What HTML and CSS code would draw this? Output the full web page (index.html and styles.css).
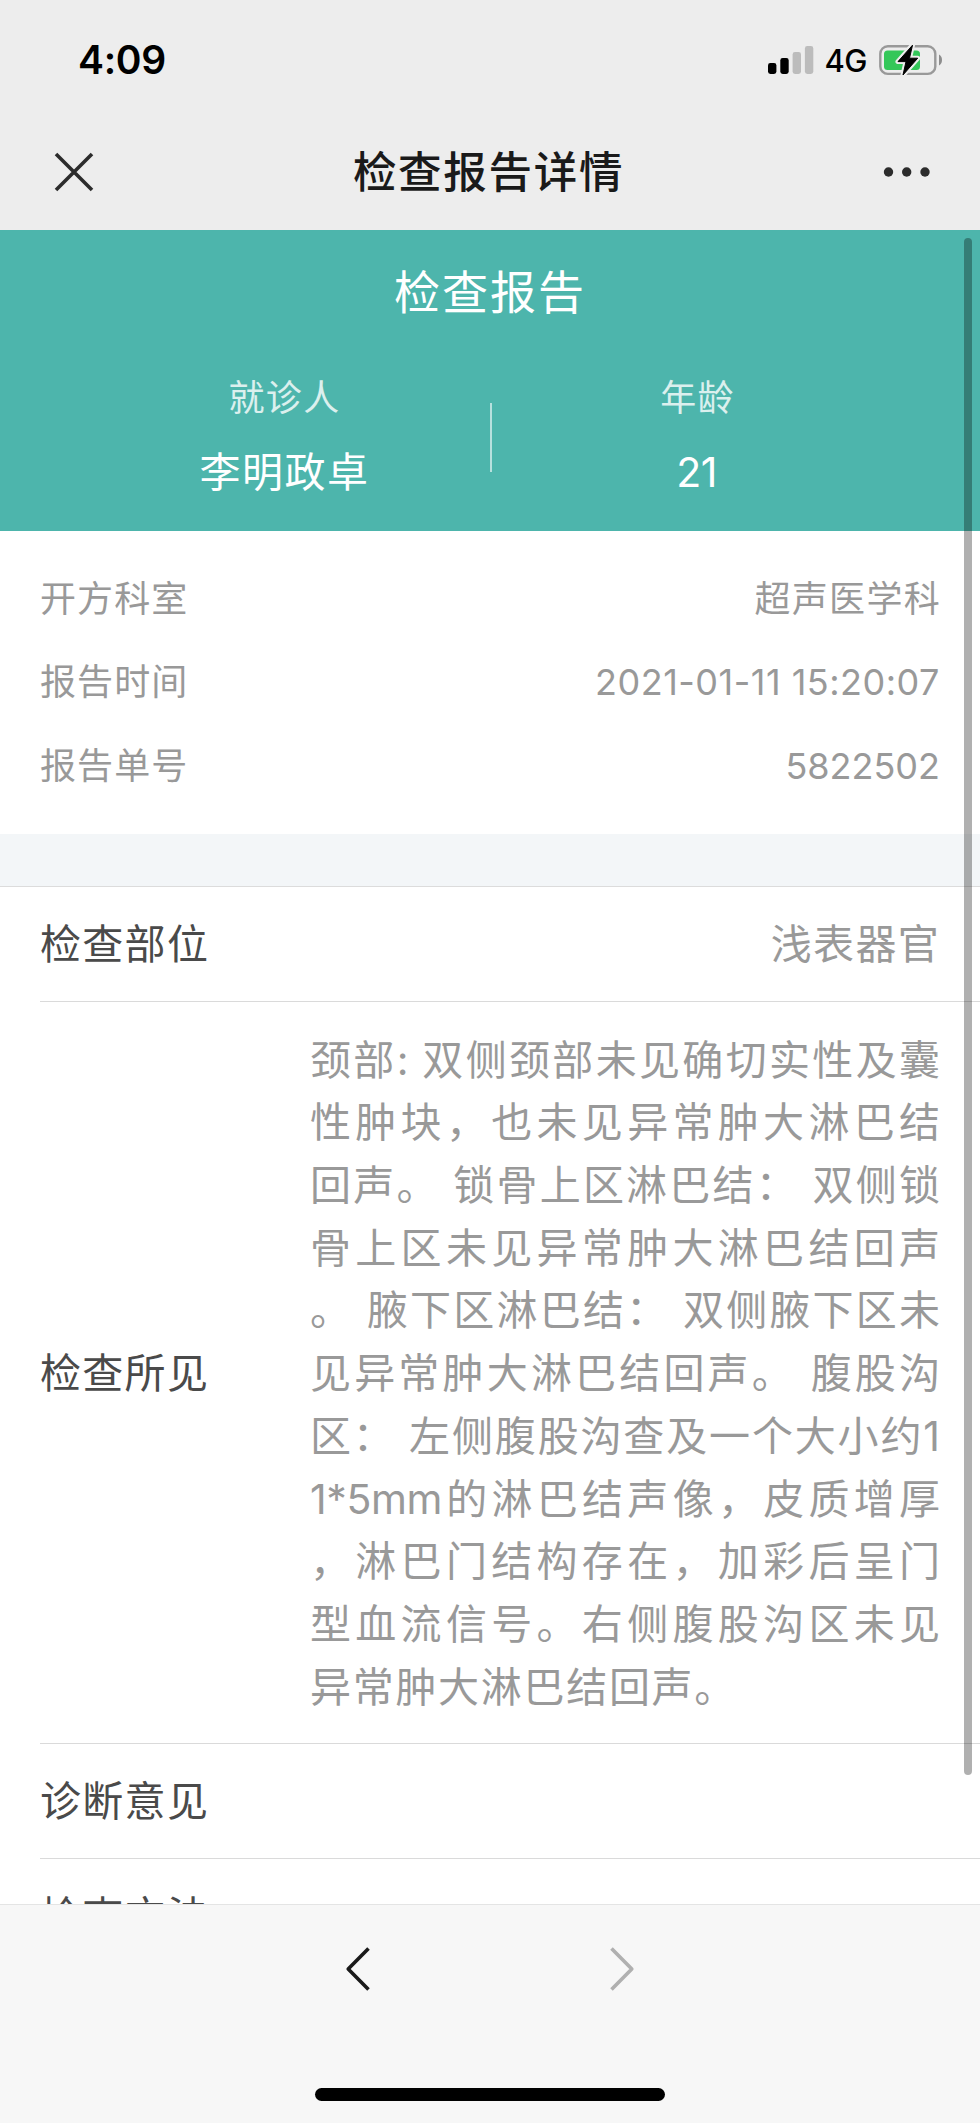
FILE: index.html
```html
<!DOCTYPE html>
<html lang="zh-CN">
<head>
<meta charset="utf-8">
<title>检查报告详情</title>
<link rel="stylesheet" href="styles.css">
</head>
<body>
<div class="screen">
  <header class="top">
    <div class="status">
      <span class="clock">4:09</span>
      <div class="status-right">
        <svg class="signal" width="46" height="30" viewBox="0 0 46 30">
          <rect x="0" y="18" width="8.4" height="11" rx="2.4" fill="#000"/>
          <rect x="12.3" y="13" width="8.4" height="16" rx="2.4" fill="#000"/>
          <rect x="24.6" y="7" width="8.4" height="22" rx="2.4" fill="#bcbcbc"/>
          <rect x="36.9" y="1" width="8.4" height="28" rx="2.4" fill="#bcbcbc"/>
        </svg>
        <span class="network">4G</span>
        <svg class="battery" width="64" height="32" viewBox="0 0 64 32">
          <rect x="1.3" y="2.3" width="55" height="27.6" rx="7.5" fill="none" stroke="#999" stroke-width="2.4"/>
          <rect x="5" y="6.5" width="36" height="19.5" rx="3.5" fill="#34c759"/>
          <path d="M60 10.5c4 2 4 9 0 11z" fill="#8d8d8d"/>
          <path d="M33.5 1.2L19 17.6h8L24 31 38.700 14.200h-8.200z" fill="#000" stroke="#ededed" stroke-width="5" stroke-linejoin="round"/>
          <path d="M33.500 1.200L19 17.600h8L24 31 38.700 14.200h-8.200z" fill="#000" stroke="#000" stroke-width="1" stroke-linejoin="round"/>
        </svg>
      </div>
    </div>
    <nav class="nav">
      <svg width="40" height="40" viewBox="0 0 40 40"><path d="M2 2L38 38M38 2L2 38" stroke="#2c2c2c" stroke-width="3.6" fill="none"/></svg>
      <h1 class="nav-title">检查报告详情</h1>
      <svg width="48" height="12" viewBox="0 0 48 12" fill="#2c2c2c"><circle cx="5.500" cy="6" r="4.700"/><circle cx="23.700" cy="6" r="4.700"/><circle cx="42" cy="6" r="4.700"/></svg>
    </nav>
  </header>

  <main class="content">
    <section class="hero">
      <h2 class="hero-title">检查报告</h2>
      <div class="people">
        <div class="person"><span class="caption">就诊人</span><span class="name">李明政卓</span></div>
        <div class="divider"></div>
        <div class="person"><span class="caption">年龄</span><span class="name age">21</span></div>
      </div>
    </section>

    <section class="info">
      <div class="info-row"><span>开方科室</span><span class="end">超声医学科</span></div>
      <div class="info-row"><span>报告时间</span><span class="num date">2021-01-11 15:20:07</span></div>
      <div class="info-row"><span>报告单号</span><span class="num">5822502</span></div>
    </section>

    <section class="details">
      <div class="row"><span class="label">检查部位</span><span class="value">浅表器官</span></div>
      <div class="row findings">
        <span class="label">检查所见</span>
        <div class="report">
          <div class="line">颈部: 双侧颈部未见确切实性及囊</div>
          <div class="line">性肿块，也未见异常肿大淋巴结</div>
          <div class="line">回声。 锁骨上区淋巴结： 双侧锁</div>
          <div class="line">骨上区未见异常肿大淋巴结回声</div>
          <div class="line">。 腋下区淋巴结： 双侧腋下区未</div>
          <div class="line">见异常肿大淋巴结回声。 腹股沟</div>
          <div class="line">区： 左侧腹股沟查及一个大小约1</div>
          <div class="line"><span class="measure">1*5mm</span>的淋巴结声像，皮质增厚</div>
          <div class="line">，淋巴门结构存在，加彩后呈门</div>
          <div class="line">型血流信号。右侧腹股沟区未见</div>
          <div class="line last">异常肿大淋巴结回声。</div>
        </div>
      </div>
      <div class="row"><span class="label">诊断意见</span></div>
      <div class="row"><span class="label">检查方法</span></div>
    </section>
    <div class="scrollbar"></div>
  </main>

  <footer class="toolbar">
    <div class="arrows">
      <svg width="28" height="48" viewBox="0 0 28 48"><path d="M24.500 3.500L4.200 24 24.500 44.500" fill="none" stroke="#1a1a1a" stroke-width="3.600" stroke-linejoin="round"/></svg>
      <svg width="28" height="48" viewBox="0 0 28 48"><path d="M3.500 3.500L23.800 24 3.500 44.500" fill="none" stroke="#b0b0b0" stroke-width="3.600" stroke-linejoin="round"/></svg>
    </div>
    <div class="home"></div>
  </footer>
</div>
</body>
</html>
```
FILE: styles.css
```css
* { box-sizing: border-box; }
body {
  margin: 0;
  font-family: Inter, "Noto Sans CJK SC", sans-serif;
  text-spacing-trim: space-all;
  background: #fff;
}
svg { display: block; }
.screen {
  width: 980px;
  height: 2123px;
  display: flex;
  flex-direction: column;
  overflow: hidden;
}
.top {
  height: 230px;
  flex: none;
  background: #ededed;
}
.status {
  height: 120px;
  padding: 0 37px 0 78px;
  display: flex;
  justify-content: space-between;
  align-items: center;
}
.clock { font-size: 39px; font-weight: 600; line-height: 48px; letter-spacing: -0.3px; color: #000; }
.status-right { display: flex; align-items: center; }
.network { font-size: 31px; font-weight: 500; line-height: 40px; margin: 2px 12px 0 10px; letter-spacing: -0.5px; }
.nav {
  height: 104px;
  padding: 0 49px 0 54px;
  display: flex;
  justify-content: space-between;
  align-items: center;
}
.nav-title {
  margin: 0;
  font-size: 43.500px;
  font-weight: 500;
  letter-spacing: 1.700px;
  line-height: 60px;
  color: #1a1a1a;
}
.content {
  position: relative;
  height: 1674px;
  flex: none;
  overflow: hidden;
}
.hero {
  height: 301px;
  padding-top: 30px;
  background: #4db5ac;
  color: #fff;
}
.hero-title {
  margin: 0;
  font-size: 46px;
  font-weight: 400;
  letter-spacing: 2px;
  line-height: 64px;
  text-align: center;
}
.people {
  display: flex;
  align-items: center;
  padding: 44px 77px 0 79px;
}
.person {
  flex: 1;
  display: flex;
  flex-direction: column;
  align-items: center;
  gap: 14px;
}
.caption { font-size: 36px; letter-spacing: 1.300px; line-height: 60px; opacity: .8; }
.name { font-size: 41px; letter-spacing: 1.500px; line-height: 60px; }
.age { letter-spacing: -0.5px; margin-right: 2px; }
.divider { width: 2px; height: 69px; background: rgba(255,255,255,.6); margin-top: 4px; }
.info {
  height: 303px;
  padding: 26px 40px;
  color: #999;
  font-size: 36px;
  line-height: 60px;
}
.info-row {
  height: 83.670px;
  display: flex;
  justify-content: space-between;
  align-items: center;
  letter-spacing: 1.100px;
}
.end { margin-right: -1px; letter-spacing: 1.300px; }
.num { letter-spacing: 0; }
.date { letter-spacing: 0.500px; }
.details {
  border-top: 52px solid #f3f6f8;
  box-shadow: inset 0 1px #dcdcdc;
  padding: 1px 0 0 40px;
  font-size: 41px;
  line-height: 62px;
}
.row {
  height: 115px;
  display: flex;
  justify-content: space-between;
  align-items: center;
  padding-right: 40px;
  border-bottom: 1px solid #dadada;
}
.findings { height: 742px; }
.label { color: #4a4a4a; letter-spacing: 1.300px; }
.value { color: #999; letter-spacing: 1.300px; }
.report {
  width: 630px;
  padding-top: 2px;
  color: #999;
}
.line {
  line-height: 62.670px;
  white-space: nowrap;
  text-align: justify;
  text-align-last: justify;
}
.measure { font-feature-settings: "calt" 0; letter-spacing: -0.4px; }
.last { text-align-last: left; letter-spacing: 1.700px; }
.scrollbar {
  position: absolute;
  top: 8px;
  right: 8px;
  width: 8px;
  height: 1537px;
  border-radius: 4px;
  background: rgba(0,0,0,.31);
}
.toolbar {
  height: 219px;
  border-top: 1px solid #e4e4e4;
  background: #f7f7f7;
  display: flex;
  flex-direction: column;
  align-items: center;
  justify-content: space-between;
  padding: 40px 0 22px;
}
.arrows { display: flex; gap: 236px; }
.home { width: 350px; height: 13px; border-radius: 7px; background: #000; }
```
